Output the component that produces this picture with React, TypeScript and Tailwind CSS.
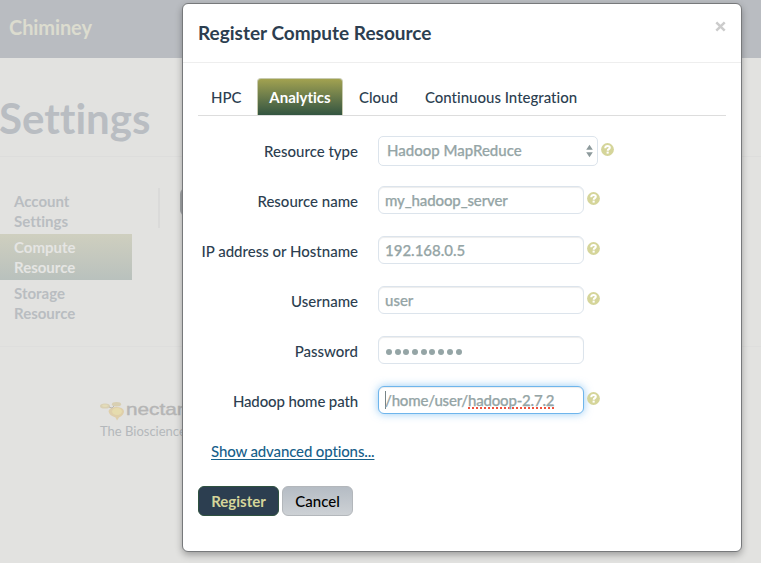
import React from "react";

function HelpIcon() {
  return (
    <svg className="h-[13px] w-[13px] shrink-0" viewBox="0 0 13 13">
      <circle cx="6.5" cy="6.5" r="6.4" fill="#d5d59a" />
      <path d="M4.2 5.2C4.3 3.5 5.3 3 6.6 3C7.9 3 8.8 3.7 8.8 4.8C8.8 6.2 6.7 6.2 6.7 7.7" fill="none" stroke="#fff" strokeWidth="2" />
      <rect x="5.6" y="8.6" width="2.1" height="2" fill="#fff" />
    </svg>
  );
}

type FieldProps = { label: string; help?: boolean; focused?: boolean; tight?: boolean; children: React.ReactNode };

function Field({ label, help = true, focused = false, tight = false, children }: FieldProps) {
  return (
    <div className="flex h-[50px] items-start">
      <div className={"mt-[5px] w-[175px] shrink-0 text-right leading-5 " + (tight ? "tracking-[-0.13px]" : "")}>{label}</div>
      <div
        className={
          "ml-5 flex h-[28px] w-[206px] items-center rounded-[6px] border bg-white pl-[6px] leading-5 text-[#95a5a6] [-webkit-text-stroke:0.25px_#95a5a6] " +
          (focused
            ? "border-[#6eb5ec] shadow-[inset_0_1px_1px_rgba(0,0,0,0.075),0_0_8px_rgba(82,168,236,0.6)]"
            : "border-[#dce4ec] shadow-[inset_0_1px_1px_rgba(0,0,0,0.075)]")
        }
      >
        {children}
      </div>
      {help && <div className="ml-[3px] mt-[6px]"><HelpIcon /></div>}
    </div>
  );
}

function PageBehind() {
  return (
    <div className="h-full">
      <header className="h-[58px] bg-[#b9bcc1] pl-[9px] pt-[14px] text-[20px] font-bold leading-[26px] tracking-[-0.1px] text-[#dcdccf]">Chiminey</header>
      <h1 className="-ml-px h-[99px] border-b border-[#dddddc] pt-[34px] text-[42px] font-bold leading-[52px] text-[#b9bdc2] [font-variant-ligatures:none]">Settings</h1>
      <div className="flex h-[190px] border-b border-[#dededd] pt-[31px] text-[15px] font-bold leading-5 text-[#b9bdc1] [font-variant-ligatures:none]">
        <nav className="w-[132px]">
          <div className="h-[46px] pl-[14px] pt-[3px]">Account<br />Settings</div>
          <div className="h-[46px] bg-linear-to-b from-[#cfcfbf] to-[#b9c1bd] pl-[14px] pt-[3px] text-[#e5e5e3]">Compute<br />Resource</div>
          <div className="h-[46px] pl-[14px] pt-[3px]">Storage<br />Resource</div>
        </nav>
        <div className="ml-[26px] h-[40px] w-[2px] bg-[#dadad9]" />
        <div className="ml-[20px] h-[28px] w-[40px] rounded-[6px] bg-[#a4a7a9]" />
      </div>
      <footer className="pl-[100px] pt-[54px] text-[13px] leading-5 text-[#b4b8bb]">
        <div className="flex h-[20px] items-center">
          <svg className="h-[20px] w-[25px] shrink-0" viewBox="0 0 25 20">
            <ellipse cx="5" cy="5" rx="5" ry="2.6" fill="#d9d0b4" />
            <ellipse cx="5" cy="4.8" rx="3" ry="1.3" fill="#e3dcb9" />
            <ellipse cx="16.5" cy="3.2" rx="4.6" ry="2.2" fill="#d8cfb2" />
            <path d="M8.5 10Q10 6 16 6Q23 6 24 10Q24 14 19 16.5L17 19.5L15.5 16.5Q9 14.5 8.5 10Z" fill="#dfcfaa" />
            <ellipse cx="17" cy="10.5" rx="5" ry="3.5" fill="#e6dcae" />
            <path d="M9 6L12 7L14 5" fill="none" stroke="#bcb9b0" />
          </svg>
          <span className="ml-[1px] inline-block origin-left -translate-y-px scale-x-[1.22] font-['Liberation_Sans',sans-serif] text-[17px] leading-5 text-[#b5b5b5] [-webkit-text-stroke:0.4px_#b5b5b5]">nectar</span>
        </div>
        <div className="whitespace-nowrap">The Biosciences</div>
      </footer>
    </div>
  );
}

export default function App() {
  return (
    <div className="relative h-[563px] w-[761px] overflow-hidden bg-[#e2e2e0] font-['Lato',sans-serif]">
      <PageBehind />
      <section className="absolute left-[182px] top-[3px] h-[549px] w-[560px] rounded-[6px] border border-[#77797b] bg-white text-[15px] font-medium text-[#2c3e50] shadow-[0_3px_7px_rgba(0,0,0,0.3)] [font-variant-ligatures:none]">
        <header className="flex h-[59px] justify-between border-b border-[#eeeeee] pl-[15px] pr-[15px]">
          <h2 className="mt-[14px] text-[19px] font-bold leading-[30px]">Register Compute Resource</h2>
          <svg className="mt-[17px] h-[11px] w-[11px]" viewBox="0 0 11 11"><path d="M1.3 1.3L9.7 9.7M9.7 1.3L1.3 9.7" stroke="#cccccc" strokeWidth="2.5" /></svg>
        </header>
        <nav className="mx-[15px] mt-[15px] flex h-[38px] border-b border-[#dddddd] leading-5">
          <div className="w-[59px] pl-[13px] pt-[9px]">HPC</div>
          <div className="h-[37px] w-[86px] rounded-t-[4px] border border-b-0 border-[#c8cbb0] bg-linear-to-b from-[#a2a250] to-[#335540] pt-[8px] text-center font-bold text-white">Analytics</div>
          <div className="pl-[16px] pt-[9px]">Cloud</div>
          <div className="whitespace-nowrap pl-[27px] pt-[9px]">Continuous Integration</div>
        </nav>
        <div className="mt-[20px]">
          <div className="flex h-[50px]">
            <div className="mt-[5px] w-[175px] text-right leading-5">Resource type</div>
            <div className="ml-5 flex h-[30px] w-[220px] items-center justify-between rounded-[5px] border border-[#dce4ec] pb-px pl-[8px] pr-[4px] text-[#95a5a6] [-webkit-text-stroke:0.25px_#95a5a6]">
              <span>Hadoop MapReduce</span>
              <svg className="h-[14px] w-[7px]" viewBox="0 0 7 14"><path d="M0.2 5.8L3.5 0.8L6.8 5.8ZM0.2 8.2L3.5 13.2L6.8 8.2Z" fill="#8d9a9c" /></svg>
            </div>
            <div className="ml-[3px] mt-[7px]"><HelpIcon /></div>
          </div>
          <Field label="Resource name"><span className="tracking-[-0.12px]">my_hadoop_server</span></Field>
          <Field label="IP address or Hostname">192.168.0.5</Field>
          <Field label="Username">user</Field>
          <Field label="Password" help={false}>
            <div className="ml-[1px] mt-[3px] flex gap-[2.7px]">
              {Array.from({ length: 9 }, (_, i) => <span key={i} className="h-[6px] w-[6px] rounded-full bg-[#95a5a6]" />)}
            </div>
          </Field>
          <Field label="Hadoop home path" focused tight>
            <span className="h-[18px] w-px bg-[#778487]" />
            <span className="-ml-px tracking-[-0.19px]">/home/user/<span className="underline decoration-[#f0513c] decoration-dotted decoration-2 underline-offset-1 [text-decoration-skip-ink:none]">hadoop-2.7.2</span></span>
          </Field>
        </div>
        <div className="ml-[28px] mt-[5px] leading-5 tracking-[-0.14px] text-[#17608a] underline underline-offset-2 [text-decoration-skip-ink:none]">Show advanced options...</div>
        <div className="ml-[15px] mt-[25px] flex gap-[3px] leading-5">
          <button className="h-[30px] w-[81px] rounded-[6px] border border-[#2f5240] bg-[#2c3e50] font-bold text-[#d5d59a]">Register</button>
          <button className="h-[30px] w-[71px] rounded-[6px] border border-[#b3b7bb] bg-linear-to-b from-[#b5bcc4] to-[#cdd1d5] text-black">Cancel</button>
        </div>
      </section>
    </div>
  );
}
